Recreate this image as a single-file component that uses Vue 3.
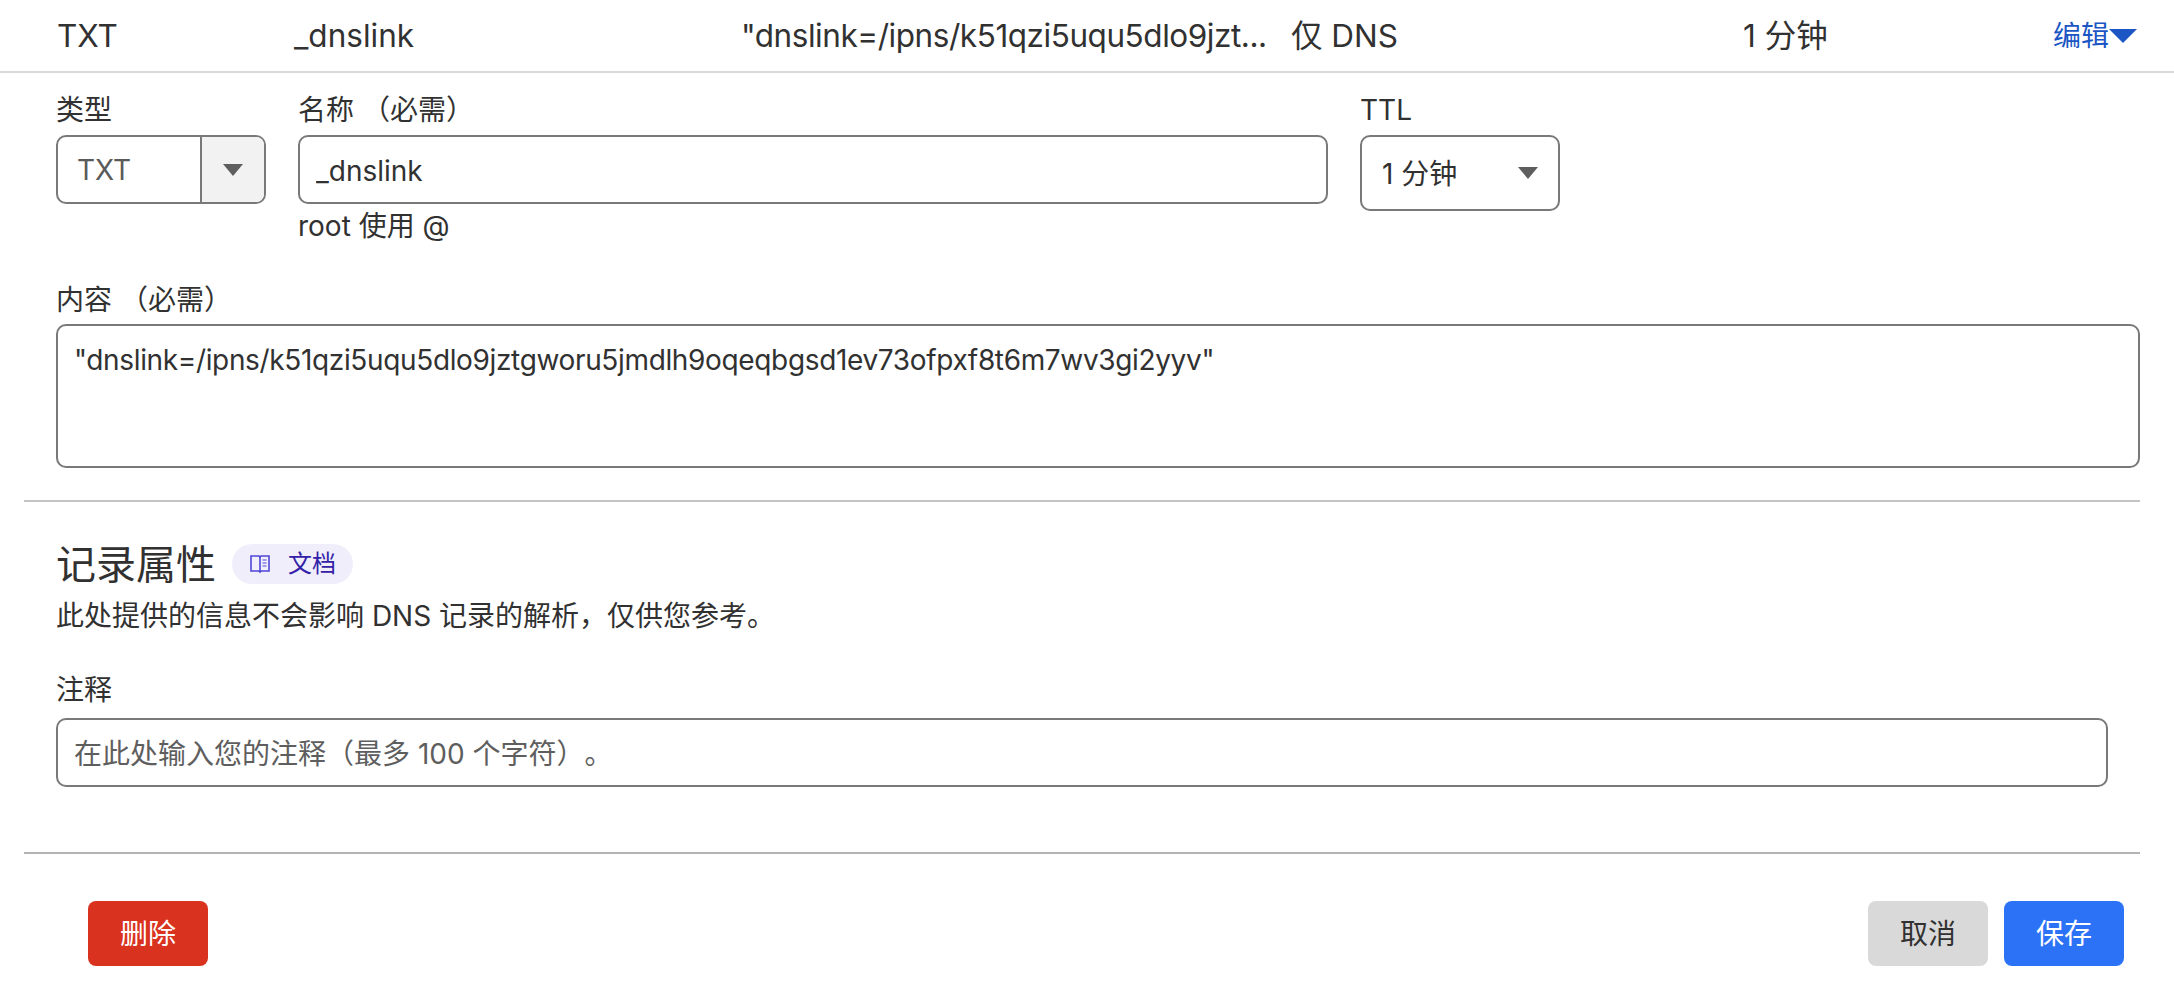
<template>
  <div class="page">
    <div class="record-row">
      <span>TXT</span>
      <span>_dnslink</span>
      <span class="truncate">"dnslink=/ipns/k51qzi5uqu5dlo9jzt...</span>
      <span>仅 DNS</span>
      <span>1 分钟</span>
      <a class="edit-link">编辑<i class="caret caret-blue"></i></a>
    </div>

    <div class="form-top">
      <div class="field field-type">
        <label>类型</label>
        <div class="select-type">
          <span class="select-value">TXT</span>
          <span class="select-btn"><i class="caret"></i></span>
        </div>
      </div>
      <div class="field field-name">
        <label>名称 （必需）</label>
        <input class="input" value="_dnslink" />
        <div class="hint">root 使用 @</div>
      </div>
      <div class="field field-ttl">
        <label>TTL</label>
        <div class="select-ttl">
          <span>1 分钟</span>
          <i class="caret"></i>
        </div>
      </div>
    </div>

    <div class="field field-content">
      <label>内容 （必需）</label>
      <textarea class="textarea" v-model="content"></textarea>
    </div>

    <hr class="divider" />

    <div class="attrs">
      <div class="attrs-head">
        <h2>记录属性</h2>
        <a class="doc-badge">
          <svg width="20" height="20" viewBox="0 0 20 20" fill="none" stroke="#4f46d8" stroke-width="1.6">
            <path d="M1 2h8l1 1 1-1h8v15h-8l-1 1-1-1H1z" />
            <path d="M10 3v14" />
            <path d="M12.500 6h4M12.500 9h4M12.500 12h4" stroke-width="1.200" />
          </svg>
          <span>文档</span>
        </a>
      </div>
      <p class="attrs-desc">此处提供的信息不会影响 DNS 记录的解析，仅供您参考。</p>
      <div class="field field-comment">
        <label>注释</label>
        <input class="input" placeholder="在此处输入您的注释（最多 100 个字符）。" />
      </div>
    </div>

    <hr class="divider divider-2" />

    <div class="actions">
      <button class="btn btn-delete">删除</button>
      <div class="actions-right">
        <button class="btn btn-cancel">取消</button>
        <button class="btn btn-save">保存</button>
      </div>
    </div>
  </div>
</template>

<script setup>
import { ref } from 'vue'

const content = ref('"dnslink=/ipns/k51qzi5uqu5dlo9jztgworu5jmdlh9oqeqbgsd1ev73ofpxf8t6m7wv3gi2yyv"')
</script>

<style>
html, body {
  background: #fff;
}
</style>

<style scoped>
.page {
  width: 2174px;
  height: 1006px;
  overflow: hidden;
  background: #fff;
  color: #313131;
  font-family: Inter, "Noto Sans CJK SC", sans-serif;
  font-size: 28px;
  line-height: 40px;
  text-spacing-trim: space-all;
}

.record-row {
  display: grid;
  grid-template-columns: 237px 447px 550px 452px 310px 1fr;
  align-items: center;
  height: 73px;
  padding-left: 57px;
  border-bottom: 2px solid #d9d9d9;
  box-sizing: border-box;
  font-size: 31.5px;
}

.truncate {
  white-space: nowrap;
  letter-spacing: -0.45px;
}

.edit-link {
  display: flex;
  align-items: center;
  font-size: 28px;
  color: #1b56c4;
}

.caret {
  display: block;
  width: 0;
  height: 0;
  border-left: 10px solid transparent;
  border-right: 10px solid transparent;
  border-top: 12px solid #5e5e5e;
}

.caret-blue {
  border-left-width: 14px;
  border-right-width: 14px;
  border-top: 14px solid #1b56c4;
}

label {
  display: block;
  height: 40px;
  line-height: 40px;
}

.form-top {
  display: flex;
  gap: 32px;
  padding: 17px 0 0 56px;
  height: 207px;
  box-sizing: border-box;
}

.field-type {
  width: 210px;
}

.field-name {
  width: 1030px;
}

.field-ttl {
  width: 200px;
}

.select-type,
.select-ttl,
.input,
.textarea {
  box-sizing: border-box;
  border: 2px solid #797979;
  border-radius: 10px;
  background: #fff;
}

.form-top label {
  margin-bottom: 5px;
}

.select-type {
  display: flex;
  height: 69px;
  overflow: hidden;
}

.select-value {
  flex: 1;
  padding: 1px 0 0 19px;
  line-height: 65px;
  color: #5a5a5a;
  font-size: 28px;
}

.select-btn {
  display: flex;
  align-items: center;
  justify-content: center;
  flex: none;
  width: 62px;
  border-left: 2px solid #797979;
  background: #f2f2f2;
}

.select-ttl {
  display: flex;
  align-items: center;
  justify-content: space-between;
  height: 76px;
  padding: 0 20px;
}

.select-ttl span {
  padding-top: 2px;
}

.input {
  display: block;
  width: 100%;
  height: 69px;
  padding: 2px 16px 0;
  font: inherit;
  color: #313131;
  outline: none;
}

.input::placeholder {
  color: #5e5e5e;
  opacity: 1;
}

.hint {
  margin-top: 2px;
}

.field-content {
  padding-left: 56px;
}

.field-content label {
  margin-bottom: 4px;
}

.textarea {
  display: block;
  width: 2084px;
  height: 144px;
  padding: 14px 16px;
  font: inherit;
  letter-spacing: -0.35px;
  color: #313131;
  resize: none;
  outline: none;
}

.divider {
  width: 2116px;
  height: 2px;
  margin: 32px 0 0 24px;
  border: 0;
  background: #c4c4c4;
}

.attrs {
  padding-left: 56px;
}

.attrs-head {
  display: flex;
  align-items: center;
  gap: 16px;
  margin-top: 41px;
  height: 42px;
}

h2 {
  margin: 0;
  padding-top: 2px;
  font-size: 40px;
  font-weight: 400;
  line-height: 48px;
}

.doc-badge {
  display: flex;
  align-items: center;
  gap: 18px;
  height: 40px;
  padding: 0 17px 0 18px;
  border-radius: 20px;
  background: #f0eefb;
  color: #3320a8;
  font-size: 24px;
}

.attrs-desc {
  margin: 11px 0 0;
}

.field-comment {
  width: 2052px;
  margin-top: 34px;
}

.field-comment label {
  margin-bottom: 8px;
}

.divider-2 {
  margin-top: 65px;
  background: #b3b3b3;
}

.actions {
  display: flex;
  justify-content: space-between;
  margin-top: 47px;
  padding: 0 50px 0 88px;
}

.actions-right {
  display: flex;
  gap: 16px;
}

.btn {
  width: 120px;
  height: 65px;
  border: 0;
  border-radius: 8px;
  font: inherit;
  color: #fff;
}

.btn-delete {
  background: #d9331f;
}

.btn-cancel {
  background: #d9d9d9;
  color: #313131;
}

.btn-save {
  background: #2c72f6;
}
</style>
